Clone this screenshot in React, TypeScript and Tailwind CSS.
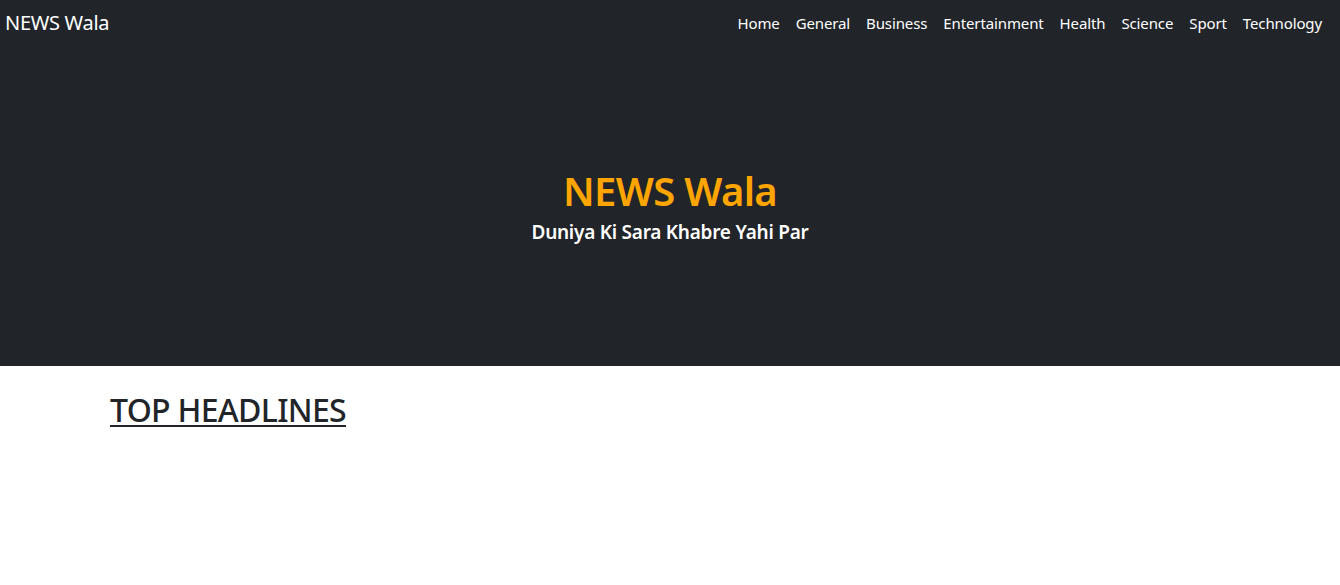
import React from 'react';

const links = ['Home', 'General', 'Business', 'Entertainment', 'Health', 'Science', 'Sport', 'Technology'];

const Navbar = () => {
  return (
    <nav className="flex items-center justify-between h-[46px] pl-[5px] pr-[10px] bg-[#212529]">
      <a href="#" className="text-[20px] tracking-[-0.3px] text-white leading-none">
        NEWS Wala
      </a>
      <ul className="flex items-center">
        {links.map((l) => (
          <li key={l}>
            <a href="#" className="block px-2 text-[15px] tracking-[-0.12px] text-white leading-none">
              {l}
            </a>
          </li>
        ))}
      </ul>
    </nav>
  );
};

const Hero = () => {
  return (
    <div className="flex flex-col items-center justify-center h-[320px] bg-[#212529] text-center">
      <h1 className="text-[40px] tracking-[-0.65px] font-semibold leading-tight text-[#ffa500]">NEWS Wala</h1>
      <h5 className="mt-[2px] text-[19px] tracking-[-0.25px] font-semibold text-white">Duniya Ki Sara Khabre Yahi Par</h5>
    </div>
  );
};

export default function App() {
  return (
    <div className="min-h-[585px] bg-white font-['Noto_Sans',sans-serif]">
      <Navbar />
      <Hero />
      <div className="mx-auto w-[1140px] pl-[10px] pr-3 pt-[24px]">
        <h2 className="text-[32px] tracking-[-0.7px] font-medium text-[#212529] underline underline-offset-[3px] decoration-2 leading-tight">
          TOP HEADLINES
        </h2>
      </div>
    </div>
  );
}
